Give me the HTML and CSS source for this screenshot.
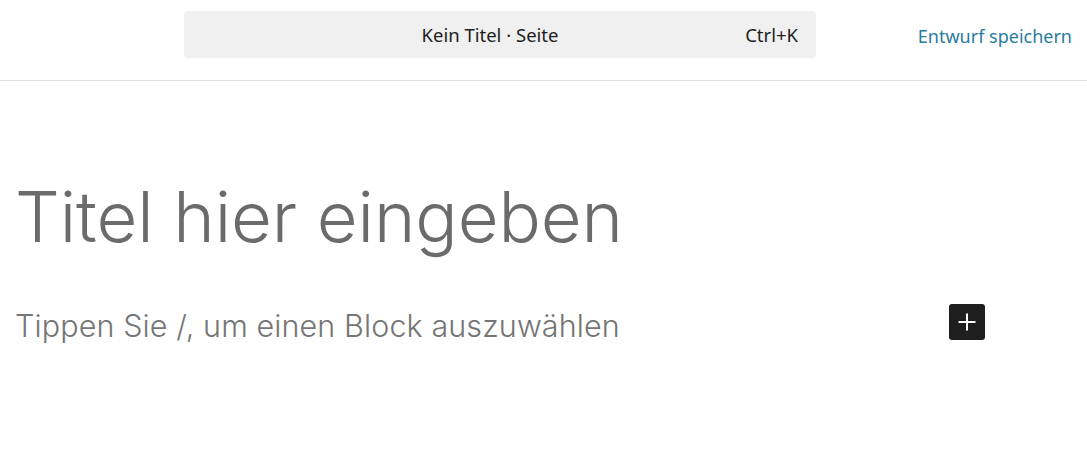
FILE: index.html
```
<!DOCTYPE html>
<html lang="de">
<head>
  <meta charset="UTF-8">
  <title>Kein Titel · Seite</title>
  <link rel="stylesheet" href="styles.css">
</head>
<body>
  <header class="topbar">
    <div class="topbar-left"></div>
    <div class="command-bar">
      <span class="command-title">Kein Titel · Seite</span>
      <span class="command-shortcut">Ctrl+K</span>
    </div>
    <div class="topbar-right">
      <a class="save-draft" href="#">Entwurf speichern</a>
    </div>
  </header>

  <main class="editor">
    <h1 class="post-title">Titel hier eingeben</h1>
    <div class="block-row">
      <p class="block-placeholder">Tippen Sie /, um einen Block auszuwählen</p>
      <button class="inserter" aria-label="Block hinzufügen">
        <svg width="20" height="20" viewBox="0 0 20 20"><path d="M10 1.5V18.5M1.5 10H18.5" stroke="#fff" stroke-width="2"/></svg>
      </button>
    </div>
  </main>
</body>
</html>
```

FILE: styles.css
```
body {
  margin: 0;
  font-family: "Noto Sans", "Open Sans", sans-serif;
  background: #fff;
  color: #1e1e1e;
}
.topbar {
  display: grid;
  grid-template-columns: 184px 632px 1fr;
  align-items: start;
  height: 69px;
  padding-top: 11px;
  border-bottom: 1px solid #e0e0e0;
}
.command-bar {
  position: relative;
  display: flex;
  align-items: center;
  justify-content: center;
  height: 47px;
  padding-right: 20px;
  background: #f0f0f0;
  border-radius: 4px;
  font-size: 18.5px;
  color: #1e1e1e;
}
.command-shortcut {
  position: absolute;
  right: 18px;
}
.topbar-right {
  display: flex;
  justify-content: flex-end;
  padding-right: 15px;
  line-height: 50px;
}
.save-draft {
  color: #2a7ca0;
  text-decoration: none;
  font-size: 18px;
}
.editor {
  padding: 0 17px 0 15px;
}
.post-title {
  margin: 89px 0 0;
  font-family: Inter, sans-serif;
  font-weight: 300;
  font-size: 70.5px;
  line-height: 1.32;
  color: #6b6b6b;
  letter-spacing: -0.1px;
}
.block-row {
  display: flex;
  align-items: center;
  margin-top: 44px;
}
.block-placeholder {
  flex: 1;
  margin: 0;
  font-family: Inter, sans-serif;
  font-weight: 300;
  font-size: 30.5px;
  letter-spacing: 0.1px;
  color: #757575;
}
.inserter {
  display: flex;
  align-items: center;
  justify-content: center;
  width: 36px;
  height: 36px;
  padding: 0;
  margin-right: 85px;
  margin-top: -8px;
  border: none;
  border-radius: 3px;
  background: #1e1e1e;
}
```
